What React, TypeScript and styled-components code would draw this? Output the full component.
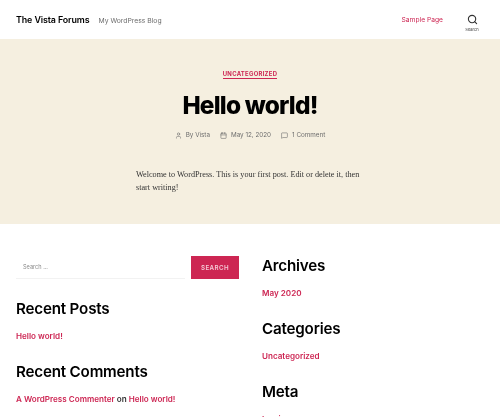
import styled, { createGlobalStyle } from 'styled-components';
import { Search, User, Calendar, MessageSquare } from 'lucide-react';

const GlobalStyle = createGlobalStyle`
  html, body {
    margin: 0;
    padding: 0;
    height: 417px;
    overflow: hidden;
    background: #fff;
    font-family: Inter, "Liberation Sans", sans-serif;
  }
  a {
    color: #cd2653;
    text-decoration: none;
  }
`;

const Page = styled.div`
  width: 500px;
  height: 417px;
  overflow: hidden;
  filter: blur(0.6px);
`;

const Header = styled.header`
  height: 39px;
  display: flex;
  align-items: center;
  padding: 0 16px;
`;

const SiteTitle = styled.div`
  font-size: 8.9px;
  font-weight: 600;
  color: #000;
  letter-spacing: -0.1px;
`;

const Tagline = styled.div`
  font-size: 6.8px;
  color: #6d6d6d;
  margin-left: 9px;
  padding-top: 1px;
`;

const NavLink = styled.a`
  font-size: 6.7px;
  margin-left: auto;
`;

const SearchToggle = styled.div`
  width: 30px;
  margin-left: 14px;
  margin-right: -3px;
  display: flex;
  flex-direction: column;
  align-items: center;
  gap: 2px;
  color: #333;
  padding-top: 6px;
  font-size: 4px;
`;

const Hero = styled.section`
  height: 185px;
  background: #f5efe0;
  display: flex;
  flex-direction: column;
  align-items: center;
  padding-top: 32px;
  box-sizing: border-box;
`;

const Category = styled.a`
  font-size: 5.9px;
  font-weight: 700;
  letter-spacing: 0.3px;
  text-transform: uppercase;
  border-bottom: 1px solid #cd2653;
  line-height: 6px;
  padding-bottom: 1px;
`;

const PostTitle = styled.h1`
  margin: 10px 0 0;
  font-size: 24.4px;
  font-weight: 800;
  line-height: 32px;
  letter-spacing: -0.8px;
  color: #000;
`;

const MetaRow = styled.div`
  display: flex;
  gap: 10px;
  margin-top: 10px;
  color: #6d6d6d;
  font-size: 6.3px;
  line-height: 8px;
`;

const MetaItem = styled.span`
  display: flex;
  align-items: center;
  gap: 4px;
`;

const PostBody = styled.p`
  width: 228px;
  margin: 30px 0 0;
  font-family: "Liberation Serif", serif;
  font-size: 8.2px;
  line-height: 12.5px;
  color: #333;
`;

const Widgets = styled.div`
  display: grid;
  grid-template-columns: 246px 1fr;
  padding: 0 16px;
`;

const WidgetColumn = styled.div`
  padding-top: 32px;
`;

const SearchForm = styled.form`
  display: flex;
  width: 223px;
  height: 23px;
  margin-bottom: 20px;
`;

const SearchField = styled.div`
  flex: 1;
  display: flex;
  align-items: center;
  padding-left: 7px;
  border-bottom: 1px solid #f2f2f2;
  font-size: 5.6px;
  color: #8a8a8a;
  height: 22px;
  margin-right: 6px;
`;

const SearchButton = styled.button`
  width: 48px;
  height: 23px;
  padding: 0;
  border: none;
  background: #cd2653;
  color: #f5c9d5;
  font-family: inherit;
  font-size: 6.2px;
  font-weight: 600;
  letter-spacing: 0.4px;
  text-transform: uppercase;
`;

const Widget = styled.div`
  margin-bottom: 20px;
`;

const WidgetTitle = styled.h2`
  margin: 0 0 12px;
  font-size: 15.2px;
  line-height: 20px;
  font-weight: 600;
  letter-spacing: -0.2px;
  color: #000;
`;

const WidgetText = styled.div`
  font-size: 8.1px;
  line-height: 11px;
  font-weight: 600;
  color: #333;
`;

export default function App() {
  return (
    <Page>
      <GlobalStyle />
      <Header>
        <SiteTitle>The Vista Forums</SiteTitle>
        <Tagline>My WordPress Blog</Tagline>
        <NavLink href="#">Sample Page</NavLink>
        <SearchToggle>
          <Search size={11} strokeWidth={2.4} />
          <span>Search</span>
        </SearchToggle>
      </Header>

      <Hero>
        <Category href="#">Uncategorized</Category>
        <PostTitle>Hello world!</PostTitle>
        <MetaRow>
          <MetaItem>
            <User size={7} />
            By Vista
          </MetaItem>
          <MetaItem>
            <Calendar size={7} />
            May 12, 2020
          </MetaItem>
          <MetaItem>
            <MessageSquare size={7} />
            1 Comment
          </MetaItem>
        </MetaRow>
        <PostBody>
          Welcome to WordPress. This is your first post. Edit or delete it, then start writing!
        </PostBody>
      </Hero>

      <Widgets>
        <WidgetColumn>
          <SearchForm>
            <SearchField>Search ...</SearchField>
            <SearchButton type="button">Search</SearchButton>
          </SearchForm>
          <Widget>
            <WidgetTitle>Recent Posts</WidgetTitle>
            <WidgetText>
              <a href="#">Hello world!</a>
            </WidgetText>
          </Widget>
          <Widget>
            <WidgetTitle>Recent Comments</WidgetTitle>
            <WidgetText>
              <a href="#">A WordPress Commenter</a> on <a href="#">Hello world!</a>
            </WidgetText>
          </Widget>
        </WidgetColumn>
        <WidgetColumn>
          <Widget>
            <WidgetTitle>Archives</WidgetTitle>
            <WidgetText>
              <a href="#">May 2020</a>
            </WidgetText>
          </Widget>
          <Widget>
            <WidgetTitle>Categories</WidgetTitle>
            <WidgetText>
              <a href="#">Uncategorized</a>
            </WidgetText>
          </Widget>
          <Widget>
            <WidgetTitle>Meta</WidgetTitle>
            <WidgetText>
              <a href="#">Log in</a>
            </WidgetText>
          </Widget>
        </WidgetColumn>
      </Widgets>
    </Page>
  );
}
